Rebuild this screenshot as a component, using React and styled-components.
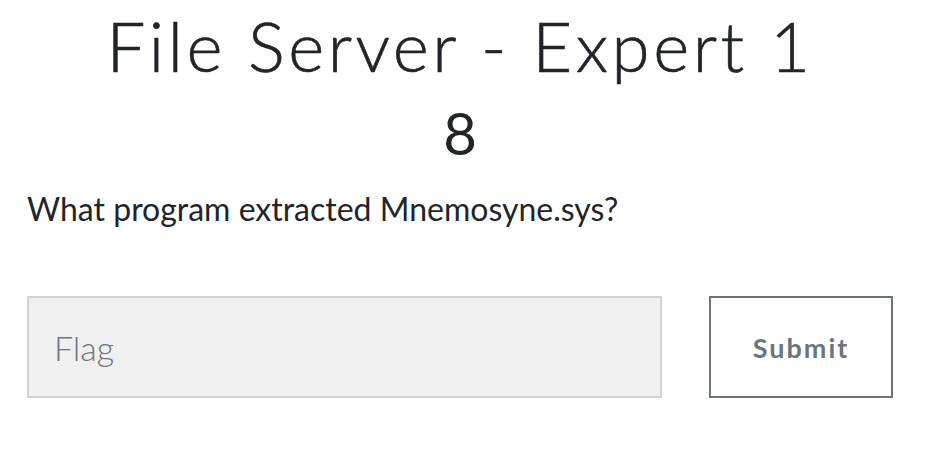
import React from 'react';
import styled, {createGlobalStyle} from 'styled-components';

const GlobalStyle = createGlobalStyle`
  body{
    margin: 0;
    background: #fff;
    font-family: Lato, "Liberation Sans", sans-serif;
    color: #212529;
  }
`;

function App() {
  return (
    <Page>
      <GlobalStyle />
      <Title>
        <span>File Server - Expert 1</span>
        <span>8</span>
      </Title>
      <Question>What program extracted Mnemosyne.sys?</Question>
      <Form onSubmit={(e) => e.preventDefault()}>
        <FlagInput placeholder="Flag" />
        <SubmitButton type="submit">Submit</SubmitButton>
      </Form>
    </Page>
  );
}

const Page = styled.div`
  width: 926px;
  padding: 2px 33px 0 27px;
  box-sizing: border-box;
`;

const Title = styled.h1`
  margin: 0;
  display: flex;
  flex-direction: column;
  align-items: center;
  font-family: Lato, "Liberation Sans", sans-serif;
  font-weight: 300;
  font-size: 69px;
  line-height: 87px;
  letter-spacing: 3.5px;
  color: #212529;
  -webkit-text-stroke: 0.6px #212529;
  span:last-child{
    font-weight: 400;
    font-size: 58px;
    letter-spacing: 0;
    -webkit-text-stroke: 0;
  }
`;

const Question = styled.p`
  margin: 13px 0 0;
  font-size: 32px;
  line-height: 40px;
`;

const Form = styled.form`
  margin-top: 67px;
  display: flex;
  align-items: flex-start;
  gap: 47px;
`;

const FlagInput = styled.input`
  flex: 0 0 635px;
  height: 102px;
  box-sizing: border-box;
  border: 2px solid #ced4da;
  background: #f0f0f0;
  padding: 0 25px;
  font-family: Lato, "Liberation Sans", sans-serif;
  font-weight: 300;
  font-size: 34px;
  color: #495057;
  outline: none;
  &::placeholder{
    color: #6c757d;
  }
`;

const SubmitButton = styled.button`
  width: 186px;
  height: 102px;
  box-sizing: border-box;
  border: 2px solid #6c757d;
  background: #fff;
  color: #6c757d;
  font-family: Lato, "Liberation Sans", sans-serif;
  font-weight: 700;
  font-size: 27px;
  letter-spacing: 2px;
  cursor: pointer;
`;

export default App;
